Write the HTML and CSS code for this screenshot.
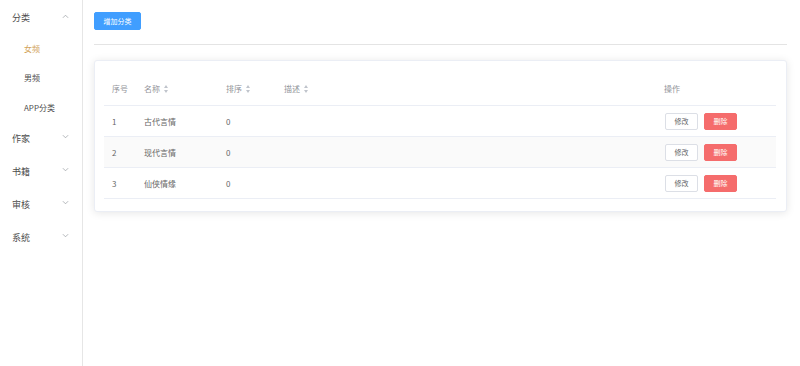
FILE: index.html
```html
<!DOCTYPE html>
<html lang="zh-CN">
<head>
    <meta charset="UTF-8">
    <title>分类管理</title>
    <link rel="stylesheet" href="styles.css">
</head>
<body>

<aside class="sidebar">
    <div class="menu-title open">
        <span>分类</span>
        <svg class="arrow" viewBox="0 0 8 5"><path d="M1 4L4 1L7 4"/></svg>
    </div>
    <div class="submenu">
        <div class="menu-item active">女频</div>
        <div class="menu-item">男频</div>
        <div class="menu-item">APP分类</div>
    </div>
    <div class="menu-title">
        <span>作家</span>
        <svg class="arrow" viewBox="0 0 8 5"><path d="M1 1L4 4L7 1"/></svg>
    </div>
    <div class="menu-title">
        <span>书籍</span>
        <svg class="arrow" viewBox="0 0 8 5"><path d="M1 1L4 4L7 1"/></svg>
    </div>
    <div class="menu-title">
        <span>审核</span>
        <svg class="arrow" viewBox="0 0 8 5"><path d="M1 1L4 4L7 1"/></svg>
    </div>
    <div class="menu-title">
        <span>系统</span>
        <svg class="arrow" viewBox="0 0 8 5"><path d="M1 1L4 4L7 1"/></svg>
    </div>
</aside>

<main class="main">
    <div class="toolbar">
        <button class="btn btn-primary">增加分类</button>
    </div>
    <div class="divider"></div>

    <div class="card">
        <table class="table">
            <thead>
            <tr>
                <th class="col-index">序号</th>
                <th class="col-name">名称<i class="sort"></i></th>
                <th class="col-order">排序<i class="sort"></i></th>
                <th class="col-desc">描述<i class="sort"></i></th>
                <th class="col-ops">操作</th>
            </tr>
            </thead>
            <tbody>
            <tr>
                <td>1</td>
                <td>古代言情</td>
                <td>0</td>
                <td></td>
                <td><button class="btn btn-default">修改</button><button class="btn btn-danger">删除</button></td>
            </tr>
            <tr class="striped">
                <td>2</td>
                <td>现代言情</td>
                <td>0</td>
                <td></td>
                <td><button class="btn btn-default">修改</button><button class="btn btn-danger">删除</button></td>
            </tr>
            <tr>
                <td>3</td>
                <td>仙侠情缘</td>
                <td>0</td>
                <td></td>
                <td><button class="btn btn-default">修改</button><button class="btn btn-danger">删除</button></td>
            </tr>
            </tbody>
        </table>
    </div>
</main>

</body>
</html>
```

FILE: styles.css
```css
* {
    box-sizing: border-box;
}

body {
    font-family: "Noto Sans CJK SC", "Noto Sans", sans-serif;
    display: flex;
    margin: 0;
    min-height: 100vh;
    background: #fff;
    color: #666;
}

.sidebar {
    width: 83px;
    flex-shrink: 0;
    border-right: 1px solid #e6e6e6;
    min-height: 100vh;
}

.menu-title {
    display: flex;
    align-items: center;
    justify-content: space-between;
    height: 33px;
    padding: 1px 13px 0 12px;
    font-size: 9px;
    color: #4d4d4d;
}

.arrow {
    width: 7px;
    height: 5px;
    fill: none;
    stroke: #a0a3a8;
    stroke-width: 0.9;
}

.menu-title.open .arrow {
    margin-top: -2px;
}

.menu-title:not(.open) .arrow {
    margin-top: -5px;
}

.menu-item {
    display: flex;
    align-items: center;
    height: 29.5px;
    padding: 1px 0 0 24px;
    font-size: 8px;
    color: #4d4d4d;
}

.menu-item.active {
    color: #d2a45c;
}

.main {
    flex: 1;
    padding: 12px 13px 0 11px;
}

.toolbar {
    display: flex;
}

.btn {
    font-family: inherit;
    font-size: 7px;
    border-radius: 2px;
    cursor: pointer;
    padding: 0;
    line-height: 1;
}

.btn-primary {
    background: #409eff;
    border: 1px solid #409eff;
    color: #fff;
    width: 47px;
    height: 18px;
}

.divider {
    height: 1px;
    background: #e4e4e4;
    margin: 14px 0 15px;
}

.card {
    background: #fff;
    border: 1px solid #ebeef5;
    border-radius: 3px;
    box-shadow: 0 1px 8px rgba(0, 0, 0, 0.1);
    padding: 9px 10px 12px 9px;
}

.table {
    width: 100%;
    border-collapse: collapse;
    font-size: 8px;
}

.table th {
    height: 35px;
    text-align: left;
    font-weight: normal;
    color: #919399;
    padding: 2px 0 0 8px;
    border-bottom: 1px solid #ebeef5;
}

.table td {
    height: 31px;
    padding: 1px 0 0 8px;
    border-bottom: 1px solid #ebeef5;
}

.table tr.striped td {
    background: #fafafa;
}

.col-index {
    width: 32px;
}

.col-name {
    width: 82px;
}

.col-order {
    width: 58px;
}

.col-ops {
    width: 120px;
}

.sort {
    display: inline-block;
    position: relative;
    width: 5px;
    height: 8px;
    margin-left: 4px;
    vertical-align: -1px;
}

.sort::before,
.sort::after {
    content: "";
    position: absolute;
    left: 0;
    border-left: 2.5px solid transparent;
    border-right: 2.5px solid transparent;
}

.sort::before {
    top: 0;
    border-bottom: 3px solid #c0c4cc;
}

.sort::after {
    bottom: 0;
    border-top: 3px solid #c0c4cc;
}

.btn-default {
    background: #fff;
    border: 1px solid #dcdfe6;
    color: #606266;
    width: 33px;
    height: 17px;
    margin-left: 1px;
}

.btn-danger {
    background: #f56c6c;
    border: 1px solid #f56c6c;
    color: #fff;
    width: 33px;
    height: 17px;
    margin-left: 6px;
}
```
